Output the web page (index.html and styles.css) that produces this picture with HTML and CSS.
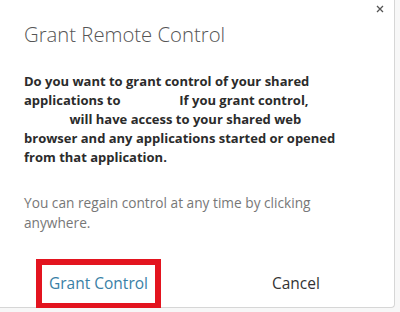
FILE: index.html
```html
<!DOCTYPE html>
<html lang="en">
<head>
    <meta charset="UTF-8">
    <meta name="viewport" content="width=device-width, initial-scale=1.0">
    <title>Grant Remote Control</title>
    <link rel="stylesheet" href="styles.css">
</head>
<body>
    <div class="dialog">
        <button class="close-btn" aria-label="Close">
            <svg width="8" height="8" viewBox="0 0 8 8">
                <path d="M1 1 L7 7 M7 1 L1 7" stroke="#555" stroke-width="1.3" fill="none"/>
            </svg>
        </button>

        <h2 class="dialog-title">Grant Remote Control</h2>

        <p class="question">
            Do you want to grant control of your shared<br>
            applications to <span class="redacted redacted-a"></span> If you grant control,<br>
            <span class="redacted redacted-b"></span> will have access to your shared web<br>
            browser and any applications started or opened<br>
            from that application.
        </p>

        <p class="note">You can regain control at any time by clicking<br>anywhere.</p>

        <div class="dialog-actions">
            <button class="action primary">Grant Control</button>
            <button class="action">Cancel</button>
        </div>
    </div>
</body>
</html>
```

FILE: styles.css
```css
body {
    margin: 0;
    background-color: #f7f7f7;
    font-family: "Open Sans", "Noto Sans", Arial, sans-serif;
    color: #333;
}
.dialog {
    position: relative;
    width: 395px;
    height: 308px;
    box-sizing: border-box;
    background-color: #fff;
    border-right: 1px solid #d6d6d6;
    border-bottom: 1px solid #d6d6d6;
    border-bottom-right-radius: 4px;
    padding: 20px 24px 0 24px;
}
.close-btn {
    position: absolute;
    top: 2px;
    right: 7px;
    width: 14px;
    height: 14px;
    padding: 0;
    border: none;
    background: none;
    display: flex;
    align-items: center;
    justify-content: center;
}
.dialog-title {
    margin: 0;
    font-size: 20.3px;
    font-weight: 300;
    line-height: 28px;
    color: #555;
}
.question {
    margin: 24px 0 0 0;
    font-size: 13px;
    font-weight: 700;
    line-height: 19px;
    color: #2b2b2b;
}
.redacted {
    display: inline-block;
}
.redacted-a {
    width: 52px;
}
.redacted-b {
    width: 42px;
}
.note {
    margin: 26px 0 0 0;
    font-size: 13.7px;
    line-height: 20px;
    color: #777;
}
.dialog-actions {
    display: flex;
    align-items: flex-start;
    margin-top: 26px;
    margin-left: 12px;
}
.action {
    font-family: inherit;
    font-size: 15.5px;
    line-height: 20px;
    background: none;
    border: 6px solid transparent;
    color: #333;
    padding: 8px 7px 10px 7px;
    cursor: pointer;
}
.action.primary {
    color: #3a7fa6;
    border-color: #e3141f;
}
.action + .action {
    margin-left: 98px;
}
```
